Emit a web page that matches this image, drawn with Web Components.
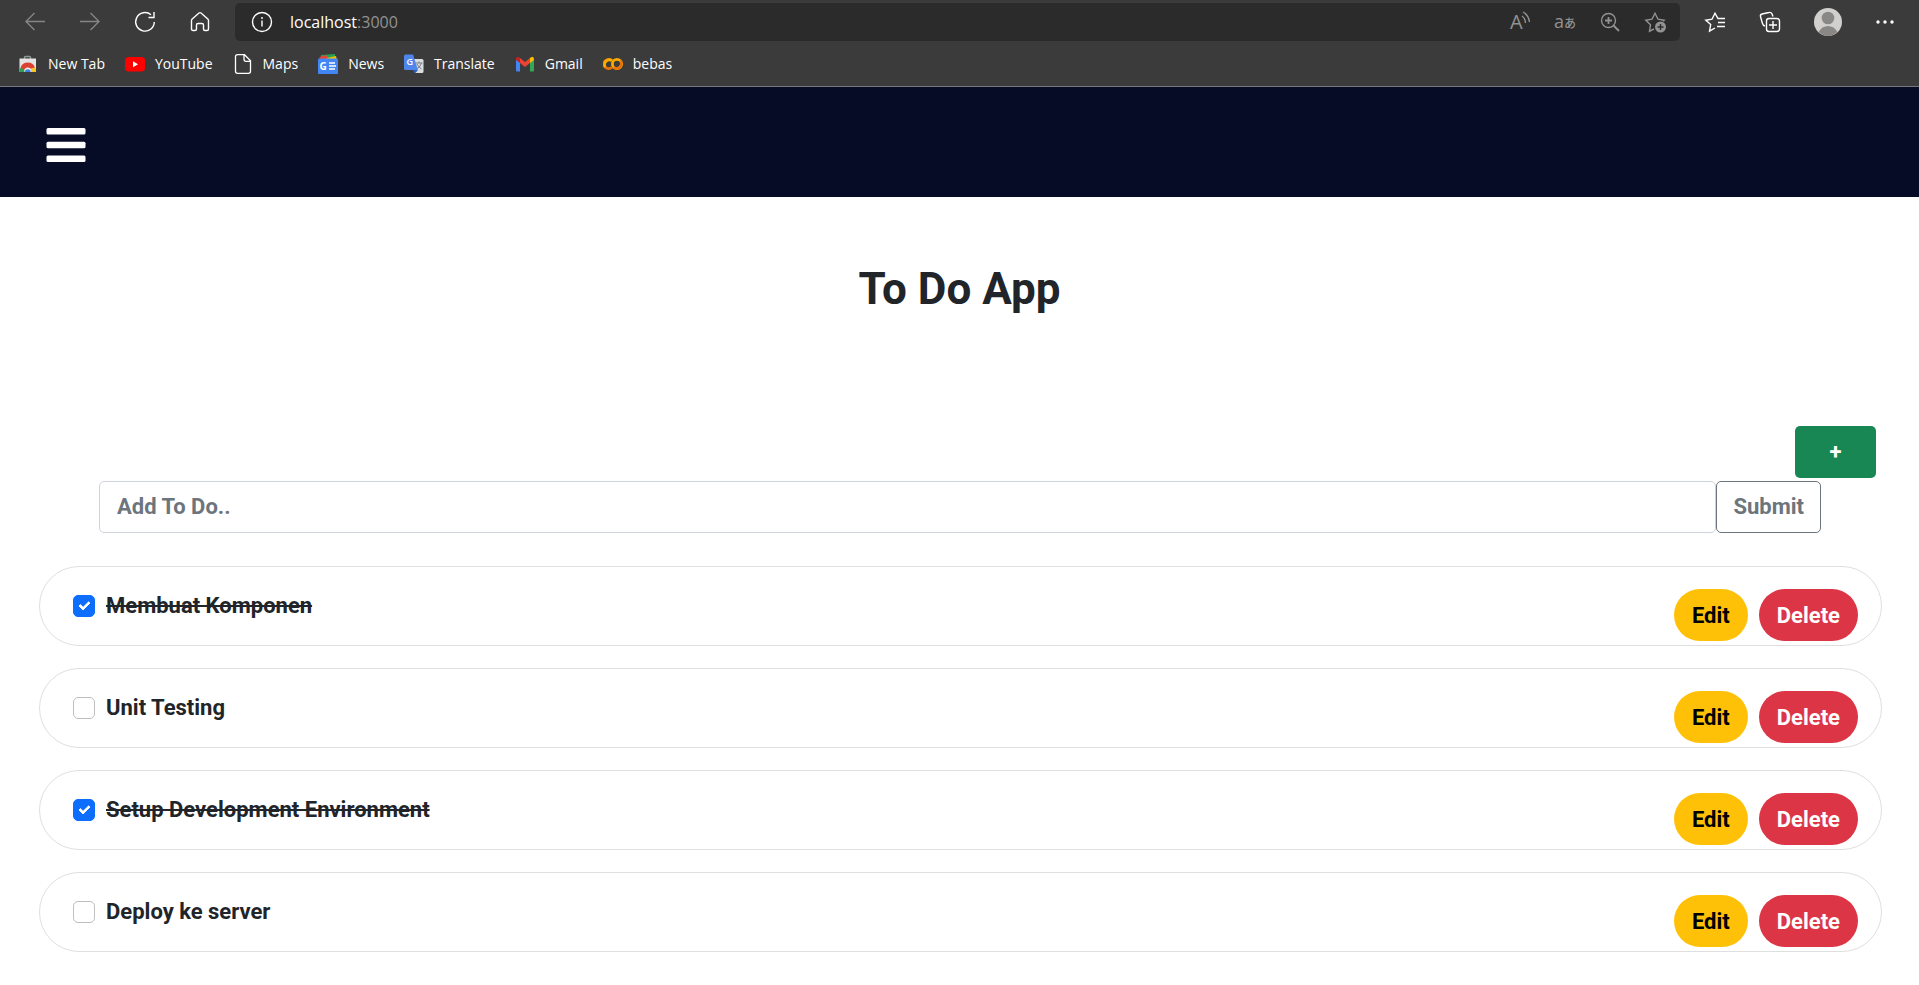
<!DOCTYPE html>
<html lang="id">
<head>
<meta charset="utf-8">
<meta name="viewport" content="width=device-width, initial-scale=1">
<title>To Do App</title>
<style>
  body { margin: 0; background: #fff; color: #212529; font: 700 22px/33px Roboto, sans-serif; }
</style>
</head>
<body>
<browser-chrome>
  <book-mark label="New Tab">
    <svg width="20" height="20" viewBox="0 0 20 20"><path d="M6.500 5V3.500Q6.500 2.500 7.500 2.500h4q1 0 1 1V5" fill="none" stroke="#8d9a94" stroke-width="1.500"/><path d="M1.500 4.500h16.500V18H1.500z" fill="#e4e4e4"/><path d="M1.500 18v-3l2.500-2 4 5z" fill="#2aa154"/><path d="M2.500 13.500a7.800 7.800 0 0 1 14.500 0l-4 2.500a4 4 0 0 0-6.500 0z" fill="#dd4132"/><path d="M12.500 14.500l4.500-1 1 1.500v3h-6z" fill="#f5c428"/><circle cx="9.800" cy="17" r="3.500" fill="#eee"/><path d="M1.500 18h17v2.500h-17z" fill="#3b3b3b"/><path d="M7 18a2.800 2.800 0 0 1 5.600 0z" fill="#3f7eea"/></svg>
  </book-mark>
  <book-mark label="YouTube">
    <svg width="20" height="20" viewBox="0 0 20 20"><rect y="3" width="20" height="14.500" rx="3.500" fill="#f00"/><path d="M8 7.200v6l5-3z" fill="#fff"/></svg>
  </book-mark>
  <book-mark label="Maps">
    <svg width="20" height="20" viewBox="0 0 20 20" fill="none" stroke="#fff" stroke-width="1.300"><path d="M4.500.700h7l6 6v10.600q0 2-2 2h-11q-2 0-2-2V2.700q0-2 2-2zM11 1v4.300q0 2 2 2h4.500"/></svg>
  </book-mark>
  <book-mark label="News">
    <svg width="20" height="20" viewBox="0 0 20 20"><path d="M3 1l14-1v5H3z" fill="#25a355"/><path d="M1.500 3L8 1l3 5H2z" fill="#ea4335"/><path d="M9 4l9-2 1 4H8z" fill="#fbbc04"/><rect y="4.500" width="20" height="15.500" rx="1" fill="#4285f4"/><text x="1.500" y="15.500" font-family="Open Sans, sans-serif" font-weight="700" font-size="10" fill="#fff">G</text><path d="M11 9h6M11 12h7M11 15h6" stroke="#fff" stroke-width="1.500"/></svg>
  </book-mark>
  <book-mark label="Translate">
    <svg width="20" height="20" viewBox="0 0 20 20"><path d="M8 5h10q1.500 0 1.500 1.500v11q0 1.500-1.500 1.500h-7z" fill="#dadce0"/><path d="M11.500 9h7M15 7.500V9m2.500 0q-1 4-5 6m.500-5q1.500 3 4.500 5" fill="none" stroke="#777f88" stroke-width="1"/><path d="M1.500.500H9L14 16H1.500Q0 16 0 14.500V2Q0 .500 1.500.500z" fill="#4f86ec"/><path d="M9 16h5l-3 3.500z" fill="#2b5fc0"/><text x="2.500" y="11" font-family="Open Sans, sans-serif" font-weight="600" font-size="9" fill="#fff">G</text></svg>
  </book-mark>
  <book-mark label="Gmail">
    <svg width="20" height="20" viewBox="0 0 20 20"><path d="M1 5l4 3v9.500H2q-1 0-1-1z" fill="#4285f4"/><path d="M15 8l4-3v11.500q0 1-1 1h-3z" fill="#34a853"/><path d="M5 4l5 4 5-4v5l-5 4-5-4z" fill="#ea4335"/><path d="M1 5q.500-3 3-1.800L5 4v5L1 6z" fill="#c5221f"/><path d="M15 4l1-.800Q18.500 2 19 5v1l-4 3z" fill="#fbbc04"/></svg>
  </book-mark>
  <book-mark label="bebas">
    <svg width="20" height="20" viewBox="0 0 20 20" fill="none" stroke-width="2.800"><path d="M9 6.700A4.700 4.700 0 1 0 9 13.300" stroke="#e8710a"/><path d="M9 6.700A4.700 4.700 0 0 0 2.300 13" stroke="#f9ab00"/><circle cx="14" cy="10" r="4.600" stroke="#f9ab00"/><path d="M10.700 13.300a4.700 4.700 0 0 0 6.600-6.600" stroke="#e8710a"/></svg>
  </book-mark>
</browser-chrome>
<nav-bar></nav-bar>
<todo-app heading="To Do App">
  <todo-item done>Membuat Komponen</todo-item>
  <todo-item>Unit Testing</todo-item>
  <todo-item done>Setup Development Environment</todo-item>
  <todo-item>Deploy ke server</todo-item>
</todo-app>

<script>
const define = (name, html, setup) => customElements.define(name, class extends HTMLElement {
  connectedCallback() {
    if (this.shadowRoot) return;
    const template = document.createElement('template');
    template.innerHTML = html;
    this.attachShadow({ mode: 'open' }).append(template.content.cloneNode(true));
    if (setup) setup(this, this.shadowRoot);
  }
});

define('book-mark', `
<style>
  :host { display: block; }
  a { display: flex; align-items: center; gap: 10px; color: #fff; text-decoration: none; }
  ::slotted(svg) { display: block; }
</style>
<a href="#"><slot></slot><span></span></a>`,
  (el, root) => { root.querySelector('span').textContent = el.getAttribute('label'); });

define('browser-chrome', `
<style>
  :host { display: block; background: #3b3b3b; border-bottom: 1px solid #77777c; color: #fff; font: 400 14px/20px "Open Sans", "Noto Sans CJK JP", sans-serif; }
  .bar { display: flex; align-items: center; gap: 1px; padding: 3px 8px 0; }
  button { display: flex; flex: none; align-items: center; justify-content: center; width: 54px; height: 38px; padding: 0; border: 0; background: none; color: inherit; font: inherit; }
  button.profile { width: 60px; }
  button.more { width: 52px; }
  svg { display: block; fill: none; stroke: currentColor; stroke-width: 1.4; overflow: visible; }
  .off { color: #858585; }
  .address { flex: 1; display: flex; align-items: center; gap: 1px; height: 38px; margin: 0 7px; padding-right: 3px; border-radius: 5px; background: #2b2b2b; }
  .address button { width: 44px; color: #929292; }
  .address button.info { width: 54px; color: #fff; }
  .url { flex: 1; font-size: 16px; }
  .url span { color: #929292; }
  .lang { font-size: 18px; }
  .lang small { font-size: 12px; font-weight: 500; }
  .marks { display: flex; gap: 20px; padding: 13px 18px 12px; }
</style>
<div class="bar">
  <button class="off" aria-label="Back"><svg width="20" height="20" viewBox="0 0 20 20"><path d="M20 9.500H1M9.500 1L1 9.500 9.500 18"/></svg></button>
  <button class="off" aria-label="Forward"><svg width="20" height="20" viewBox="0 0 20 20"><path d="M0 9.500h19M10.500 1L19 9.500 10.500 18"/></svg></button>
  <button aria-label="Refresh"><svg width="20" height="20" viewBox="0 0 20 20"><path d="M16 2.700A9.300 9.300 0 1 0 19.300 10M19 0v5.500h-5.500"/></svg></button>
  <button aria-label="Home"><svg width="20" height="20" viewBox="0 0 20 20"><path d="M1.500 8.500Q1.500 7.700 2.200 7L9 1q1-.800 2 0l6.800 6q.700.700.700 1.500V17q0 1.500-1.500 1.500h-2q-1.500 0-1.500-1.500v-4q0-1.500-1.500-1.500H8q-1.500 0-1.500 1.500v4q0 1.500-1.500 1.500H3Q1.500 18.500 1.500 17z"/></svg></button>
  <div class="address">
    <button class="info" aria-label="Site information"><svg width="20" height="20" viewBox="0 0 20 20"><circle cx="10" cy="10" r="9.500"/><path d="M10 8.500v6M10 5v2"/></svg></button>
    <div class="url">localhost<span>:3000</span></div>
    <button aria-label="Read aloud"><svg width="20" height="20" viewBox="0 0 20 20"><text x="0" y="17" font-family="Open Sans, sans-serif" font-size="20" fill="currentColor" stroke="none">A</text><path d="M12 4q3 2 3.500 7M13 0q5.500 3 6.500 10"/></svg></button>
    <button class="lang" aria-label="Translate"><span>a<small>あ</small></span></button>
    <button aria-label="Zoom"><svg width="20" height="20" viewBox="0 0 20 20"><circle cx="8.500" cy="8.500" r="7"/><path d="M13.500 13.500l5.500 5.500M8.500 5v7M5 8.500h7" stroke-width="1.800"/></svg></button>
    <button aria-label="Add favourite"><svg width="20" height="20" viewBox="0 0 20 20"><path d="M9 17l-4.500 2.200 1-6.400L.800 8.200l6.200-1L10 1.200l3 6 6.200 1-1.500 1.600"/><circle cx="15.500" cy="15" r="6.300" fill="#2b2b2b" stroke="none"/><circle cx="15.500" cy="15" r="5.500" fill="currentColor" stroke="none"/><path d="M15.500 12v6m-3-3h6" stroke="#2b2b2b"/></svg></button>
  </div>
  <button aria-label="Favourites"><svg width="20" height="20" viewBox="0 0 20 20"><path d="M10 16l-5.500 3.200 1.200-6.700L.800 8.200l6.200-1L10 1.200l3 5.300h7M13 10.500h7M12 14.500h8"/></svg></button>
  <button aria-label="Collections"><svg width="20" height="20" viewBox="0 0 20 20"><rect x="6.500" y="6.500" width="13" height="13" rx="2.500"/><path d="M13 9v8M9 13h8M5 14q-2-.500-2.700-3L.500 4.500Q0 2.800 2 2L9 .500q2-.500 2.800 1L13 4.500"/></svg></button>
  <button class="profile" aria-label="Profile"><svg width="28" height="28" viewBox="0 0 28 28"><circle cx="14" cy="14" r="14" fill="#d2d0ce" stroke="none"/><circle cx="14" cy="10" r="6.300" fill="#8a8886" stroke="none"/><path d="M4.500 24Q8 18 14 18t9.500 6Q19 28 14 28t-9.500-4z" fill="#8a8886" stroke="none"/></svg></button>
  <button class="more" aria-label="More"><svg width="18" height="4" viewBox="0 0 18 4"><g fill="currentColor" stroke="none"><circle cx="2" cy="2" r="1.700"/><circle cx="9" cy="2" r="1.700"/><circle cx="16" cy="2" r="1.700"/></g></svg></button>
</div>
<div class="marks"><slot></slot></div>`);

define('nav-bar', `
<style>
  :host { display: block; background: #060b26; }
  nav { display: flex; align-items: center; height: 110px; padding: 0 46px; box-sizing: border-box; }
  button { padding: 6px 0 0; border: 0; background: none; color: #fff; }
  svg { display: block; fill: currentColor; }
</style>
<nav><button aria-label="Menu"><svg width="40" height="34" viewBox="0 0 40 34"><rect x=".500" width="39" height="6.500" rx="1.500"/><rect x=".500" y="13.700" width="39" height="6.500" rx="1.500"/><rect x=".500" y="27.500" width="39" height="6.500" rx="1.500"/></svg></button></nav>`);

define('todo-item', `
<style>
  :host { display: block; }
  article { display: flex; justify-content: space-between; height: 80px; padding: 0 23px 0 33px; box-sizing: border-box; border: 1px solid #dfdfe0; border-radius: 40px; }
  label { display: flex; align-items: center; gap: 11px; }
  label span { padding-bottom: 2px; }
  input { appearance: none; display: grid; place-items: center; width: 22px; height: 22px; margin: 0; border: 1px solid #bfbfbf; border-radius: 5px; background: #fff; box-sizing: border-box; }
  input:checked { border-color: #0d6efd; background: #0d6efd; }
  input:checked::before { content: ""; width: 8px; height: 4px; margin-bottom: 3px; border: solid #fff; border-width: 0 0 3px 3px; border-radius: 1px; transform: rotate(-45deg); }
  input:checked + span { text-decoration: line-through; }
  .actions { display: flex; align-items: flex-start; gap: 11px; padding-top: 22px; }
  button { height: 52px; padding: 0 18px; border: 0; border-radius: 26px; font: inherit; }
  .edit { background: #ffc107; color: #000; }
  .delete { background: #dc3545; color: #fff; }
</style>
<article>
  <label><input type="checkbox"><span><slot></slot></span></label>
  <div class="actions"><button class="edit">Edit</button><button class="delete">Delete</button></div>
</article>`,
  (el, root) => { root.querySelector('input').checked = el.hasAttribute('done'); });

define('todo-app', `
<style>
  :host { display: block; }
  h1 { margin: 65px 0 0; font-size: 44px; line-height: 54px; text-align: center; }
  .add { display: flex; justify-content: flex-end; margin: 110px 43px 3px; }
  button, input { height: 52px; box-sizing: border-box; border-radius: 5px; font: inherit; }
  .add button { width: 81px; padding: 0 0 2px; border: 0; background: #198754; color: #fff; }
  form { display: flex; margin: 0 98px 33px 99px; }
  input { flex: 1; min-width: 0; padding: 0 17px 2px; border: 1px solid #ced4da; background: #fff; color: #212529; }
  input::placeholder { color: #6c757d; opacity: 1; }
  form button { padding: 0 16px 2px; border: 1px solid #6c757d; background: none; color: #6c757d; }
  section { display: grid; gap: 22px; margin: 0 37px 34px 39px; }
</style>
<main>
  <h1></h1>
  <div class="add"><button aria-label="Add">+</button></div>
  <form onsubmit="return false"><input type="text" placeholder="Add To Do.." aria-label="Add To Do"><button>Submit</button></form>
  <section><slot></slot></section>
</main>`,
  (el, root) => { root.querySelector('h1').textContent = el.getAttribute('heading'); });
</script>
</body>
</html>
